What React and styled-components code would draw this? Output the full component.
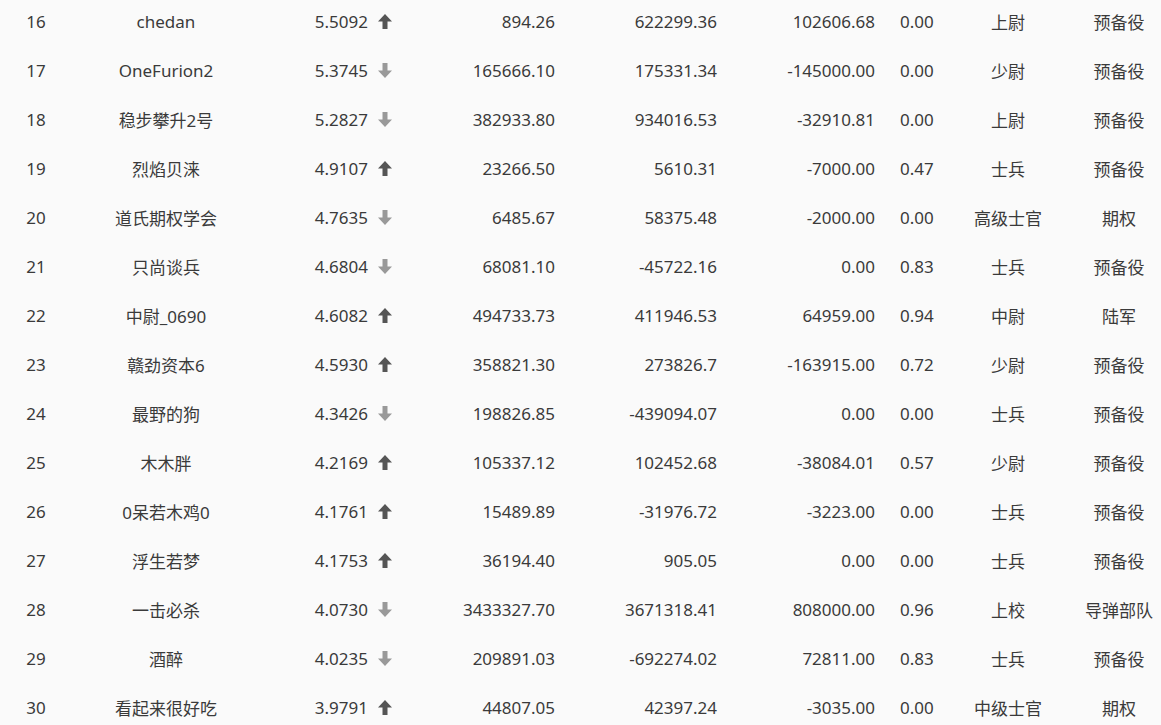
import React from 'react'
import styled, {createGlobalStyle} from 'styled-components'

const rows = [
  [16, 'chedan', '5.5092', 'up', '894.26', '622299.36', '102606.68', '0.00', '上尉', '预备役'],
  [17, 'OneFurion2', '5.3745', 'down', '165666.10', '175331.34', '-145000.00', '0.00', '少尉', '预备役'],
  [18, '稳步攀升2号', '5.2827', 'down', '382933.80', '934016.53', '-32910.81', '0.00', '上尉', '预备役'],
  [19, '烈焰贝涞', '4.9107', 'up', '23266.50', '5610.31', '-7000.00', '0.47', '士兵', '预备役'],
  [20, '道氏期权学会', '4.7635', 'down', '6485.67', '58375.48', '-2000.00', '0.00', '高级士官', '期权'],
  [21, '只尚谈兵', '4.6804', 'down', '68081.10', '-45722.16', '0.00', '0.83', '士兵', '预备役'],
  [22, '中尉_0690', '4.6082', 'up', '494733.73', '411946.53', '64959.00', '0.94', '中尉', '陆军'],
  [23, '赣劲资本6', '4.5930', 'up', '358821.30', '273826.7', '-163915.00', '0.72', '少尉', '预备役'],
  [24, '最野的狗', '4.3426', 'down', '198826.85', '-439094.07', '0.00', '0.00', '士兵', '预备役'],
  [25, '木木胖', '4.2169', 'up', '105337.12', '102452.68', '-38084.01', '0.57', '少尉', '预备役'],
  [26, '0呆若木鸡0', '4.1761', 'up', '15489.89', '-31976.72', '-3223.00', '0.00', '士兵', '预备役'],
  [27, '浮生若梦', '4.1753', 'up', '36194.40', '905.05', '0.00', '0.00', '士兵', '预备役'],
  [28, '一击必杀', '4.0730', 'down', '3433327.70', '3671318.41', '808000.00', '0.96', '上校', '导弹部队'],
  [29, '酒醉', '4.0235', 'down', '209891.03', '-692274.02', '72811.00', '0.83', '士兵', '预备役'],
  [30, '看起来很好吃', '3.9791', 'up', '44807.05', '42397.24', '-3035.00', '0.00', '中级士官', '期权'],
]

function Arrow({dir}) {
  return (
    <ArrowIcon dir={dir} width="14" height="15" viewBox="0 0 14 15">
      <path d="M7 0 L14 7.5 L9.5 7.5 L9.5 15 L4.5 15 L4.5 7.5 L0 7.5 Z" fill="currentColor"/>
    </ArrowIcon>
  )
}

function App() {
  return (
    <>
      <GlobalStyle/>
      <Table>
        {rows.map(r =>
          <Row key={r[0]}>
            <Cell align="center">{r[0]}</Cell>
            <Cell align="center">{r[1]}</Cell>
            <Score>{r[2]}<Arrow dir={r[3]}/></Score>
            <Cell align="right">{r[4]}</Cell>
            <Cell align="right">{r[5]}</Cell>
            <Cell align="right">{r[6]}</Cell>
            <Cell align="left">{r[7]}</Cell>
            <Cell align="center">{r[8]}</Cell>
            <Cell align="center" pl={6}>{r[9]}</Cell>
          </Row>
        )}
      </Table>
    </>
  )
}

export default App

const GlobalStyle = createGlobalStyle`
body {
  margin: 0;
  background: #fafafa;
  overflow: hidden;
}
`

const Table = styled.div`
margin-top: -3px;
width: 1161px;
font-family: "Noto Sans", "Noto Sans CJK SC", sans-serif;
font-size: 17px;
color: #3a3a3a;
`

const Row = styled.div`
display: grid;
grid-template-columns: 72px 188px 140px 165px 162px 158px 60px 126px 90px;
height: 49px;
align-items: center;
`

const Cell = styled.div`
text-align: ${p => p.align};
white-space: nowrap;
padding-left: ${p => p.align === 'left' ? 15 : (p.pl || 0)}px;
padding-right: ${p => p.align === 'right' ? 10 : 0}px;
`

const Score = styled.div`
display: flex;
justify-content: flex-end;
align-items: center;
gap: 10px;
padding-right: 8px;
`

const ArrowIcon = styled.svg`
flex: none;
color: ${p => p.dir === 'up' ? '#555' : '#999'};
transform: ${p => p.dir === 'up' ? 'none' : 'rotate(180deg)'};
`
